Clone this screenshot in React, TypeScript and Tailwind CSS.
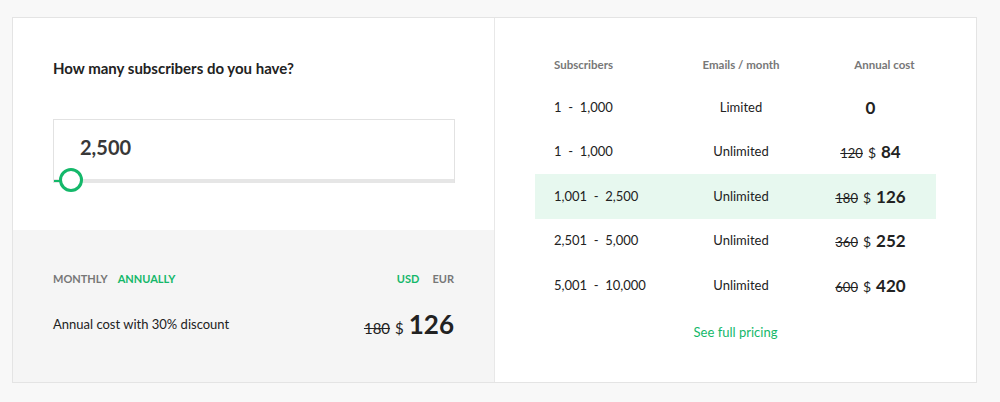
import { useState } from 'react';

const rows = [
  { range: '1 - 1,000', emails: 'Limited', old: null, price: '0' },
  { range: '1 - 1,000', emails: 'Unlimited', old: '120', price: '84' },
  { range: '1,001 - 2,500', emails: 'Unlimited', old: '180', price: '126' },
  { range: '2,501 - 5,000', emails: 'Unlimited', old: '360', price: '252' },
  { range: '5,001 - 10,000', emails: 'Unlimited', old: '600', price: '420' },
];

export default function App() {
  const [period, setPeriod] = useState<'monthly' | 'annually'>('annually');
  const [currency, setCurrency] = useState<'usd' | 'eur'>('usd');

  return (
    <div
      className="min-h-[402px] bg-[#f8f8f8] pt-[17px] pl-[12px]"
      style={{ fontFamily: 'Lato, "Open Sans", sans-serif' }}
    >
      <div className="flex w-[965px] h-[366px] border border-[#e4e4e4] bg-white">
        {/* left: calculator */}
        <div className="w-[482px] flex flex-col border-r border-[#e8e8e8]">
          <div className="h-[212px] bg-white px-[40px] pt-[40px]">
            <h2 className="text-[15px] leading-[20px] font-bold text-[#222]">
              How many subscribers do you have?
            </h2>
            <div className="relative mt-[41px] h-[64px] w-[402px] border border-[#e2e2e2] border-b-0">
              <div className="pl-[26px] pt-[14px] text-[20px] leading-[26px] font-bold text-[#383838]">2,500</div>
              <div className="absolute left-0 right-0 bottom-[0px] h-[5px] bg-[#e6e6e6] border-t border-white" />
              <div className="absolute left-0 bottom-[1px] w-[6px] h-[2px] bg-[#14b86a]" />
              <div className="absolute left-[5px] bottom-[-9px] w-[24px] h-[24px] rounded-full border-[3px] border-[#14b86a] bg-white" />
            </div>
          </div>
          <div className="flex-1 bg-[#f5f5f5] px-[40px] pt-[41px]">
            <div className="flex items-center justify-between text-[11px] leading-[16px] font-bold">
              <div className="flex gap-[10px]">
                <button
                  onClick={() => setPeriod('monthly')}
                  className={period === 'monthly' ? 'text-[#14b86a]' : 'text-[#777]'}
                >
                  MONTHLY
                </button>
                <button
                  onClick={() => setPeriod('annually')}
                  className={period === 'annually' ? 'text-[#14b86a]' : 'text-[#777]'}
                >
                  ANNUALLY
                </button>
              </div>
              <div className="flex gap-[13px]">
                <button
                  onClick={() => setCurrency('usd')}
                  className={currency === 'usd' ? 'text-[#14b86a]' : 'text-[#777]'}
                >
                  USD
                </button>
                <button
                  onClick={() => setCurrency('eur')}
                  className={currency === 'eur' ? 'text-[#14b86a]' : 'text-[#777]'}
                >
                  EUR
                </button>
              </div>
            </div>
            <div className="mt-[22px] flex items-center justify-between">
              <span className="text-[13px] text-[#222]">Annual cost with 30% discount</span>
              <span className="flex items-baseline text-[#222]">
                <span className="text-[15px] line-through mr-[5px]">180</span>
                <span className="text-[15px] mr-[5px]">$</span>
                <span className="text-[26px] leading-[30px] font-bold">126</span>
              </span>
            </div>
          </div>
        </div>

        {/* right: pricing table */}
        <div className="flex-1 px-[40px] pt-[37px]">
          <div className="grid grid-cols-[124px_164px_1fr] h-[20px] items-center text-[11.5px] font-bold text-[#777]">
            <div className="pl-[19px]">Subscribers</div>
            <div className="text-center">Emails / month</div>
            <div className="text-center pl-[28px] pr-[18px]">Annual cost</div>
          </div>
          <div className="mt-[10px]">
            {rows.map((r, i) => (
              <div
                key={i}
                className={
                  'grid grid-cols-[124px_164px_1fr] h-[44.5px] items-center text-[13px] text-[#222] ' +
                  (i === 2 ? 'bg-[#e7f8ef]' : '')
                }
              >
                <div className="pl-[19px] whitespace-pre">{r.range.replace(' - ', '  -  ')}</div>
                <div className="text-center">{r.emails}</div>
                <div className="flex items-baseline justify-center pr-[18px]">
                  {r.old && <span className="line-through mr-[5px] text-[13px]">{r.old}</span>}
                  {r.old && <span className="mr-[5px] text-[14px]">$</span>}
                  <span className="text-[17px] font-bold">{r.price}</span>
                </div>
              </div>
            ))}
          </div>
          <div className="mt-[14px] text-center text-[13px] leading-[20px] text-[#14b86a]">
            <a href="#">See full pricing</a>
          </div>
        </div>
      </div>
    </div>
  );
}
